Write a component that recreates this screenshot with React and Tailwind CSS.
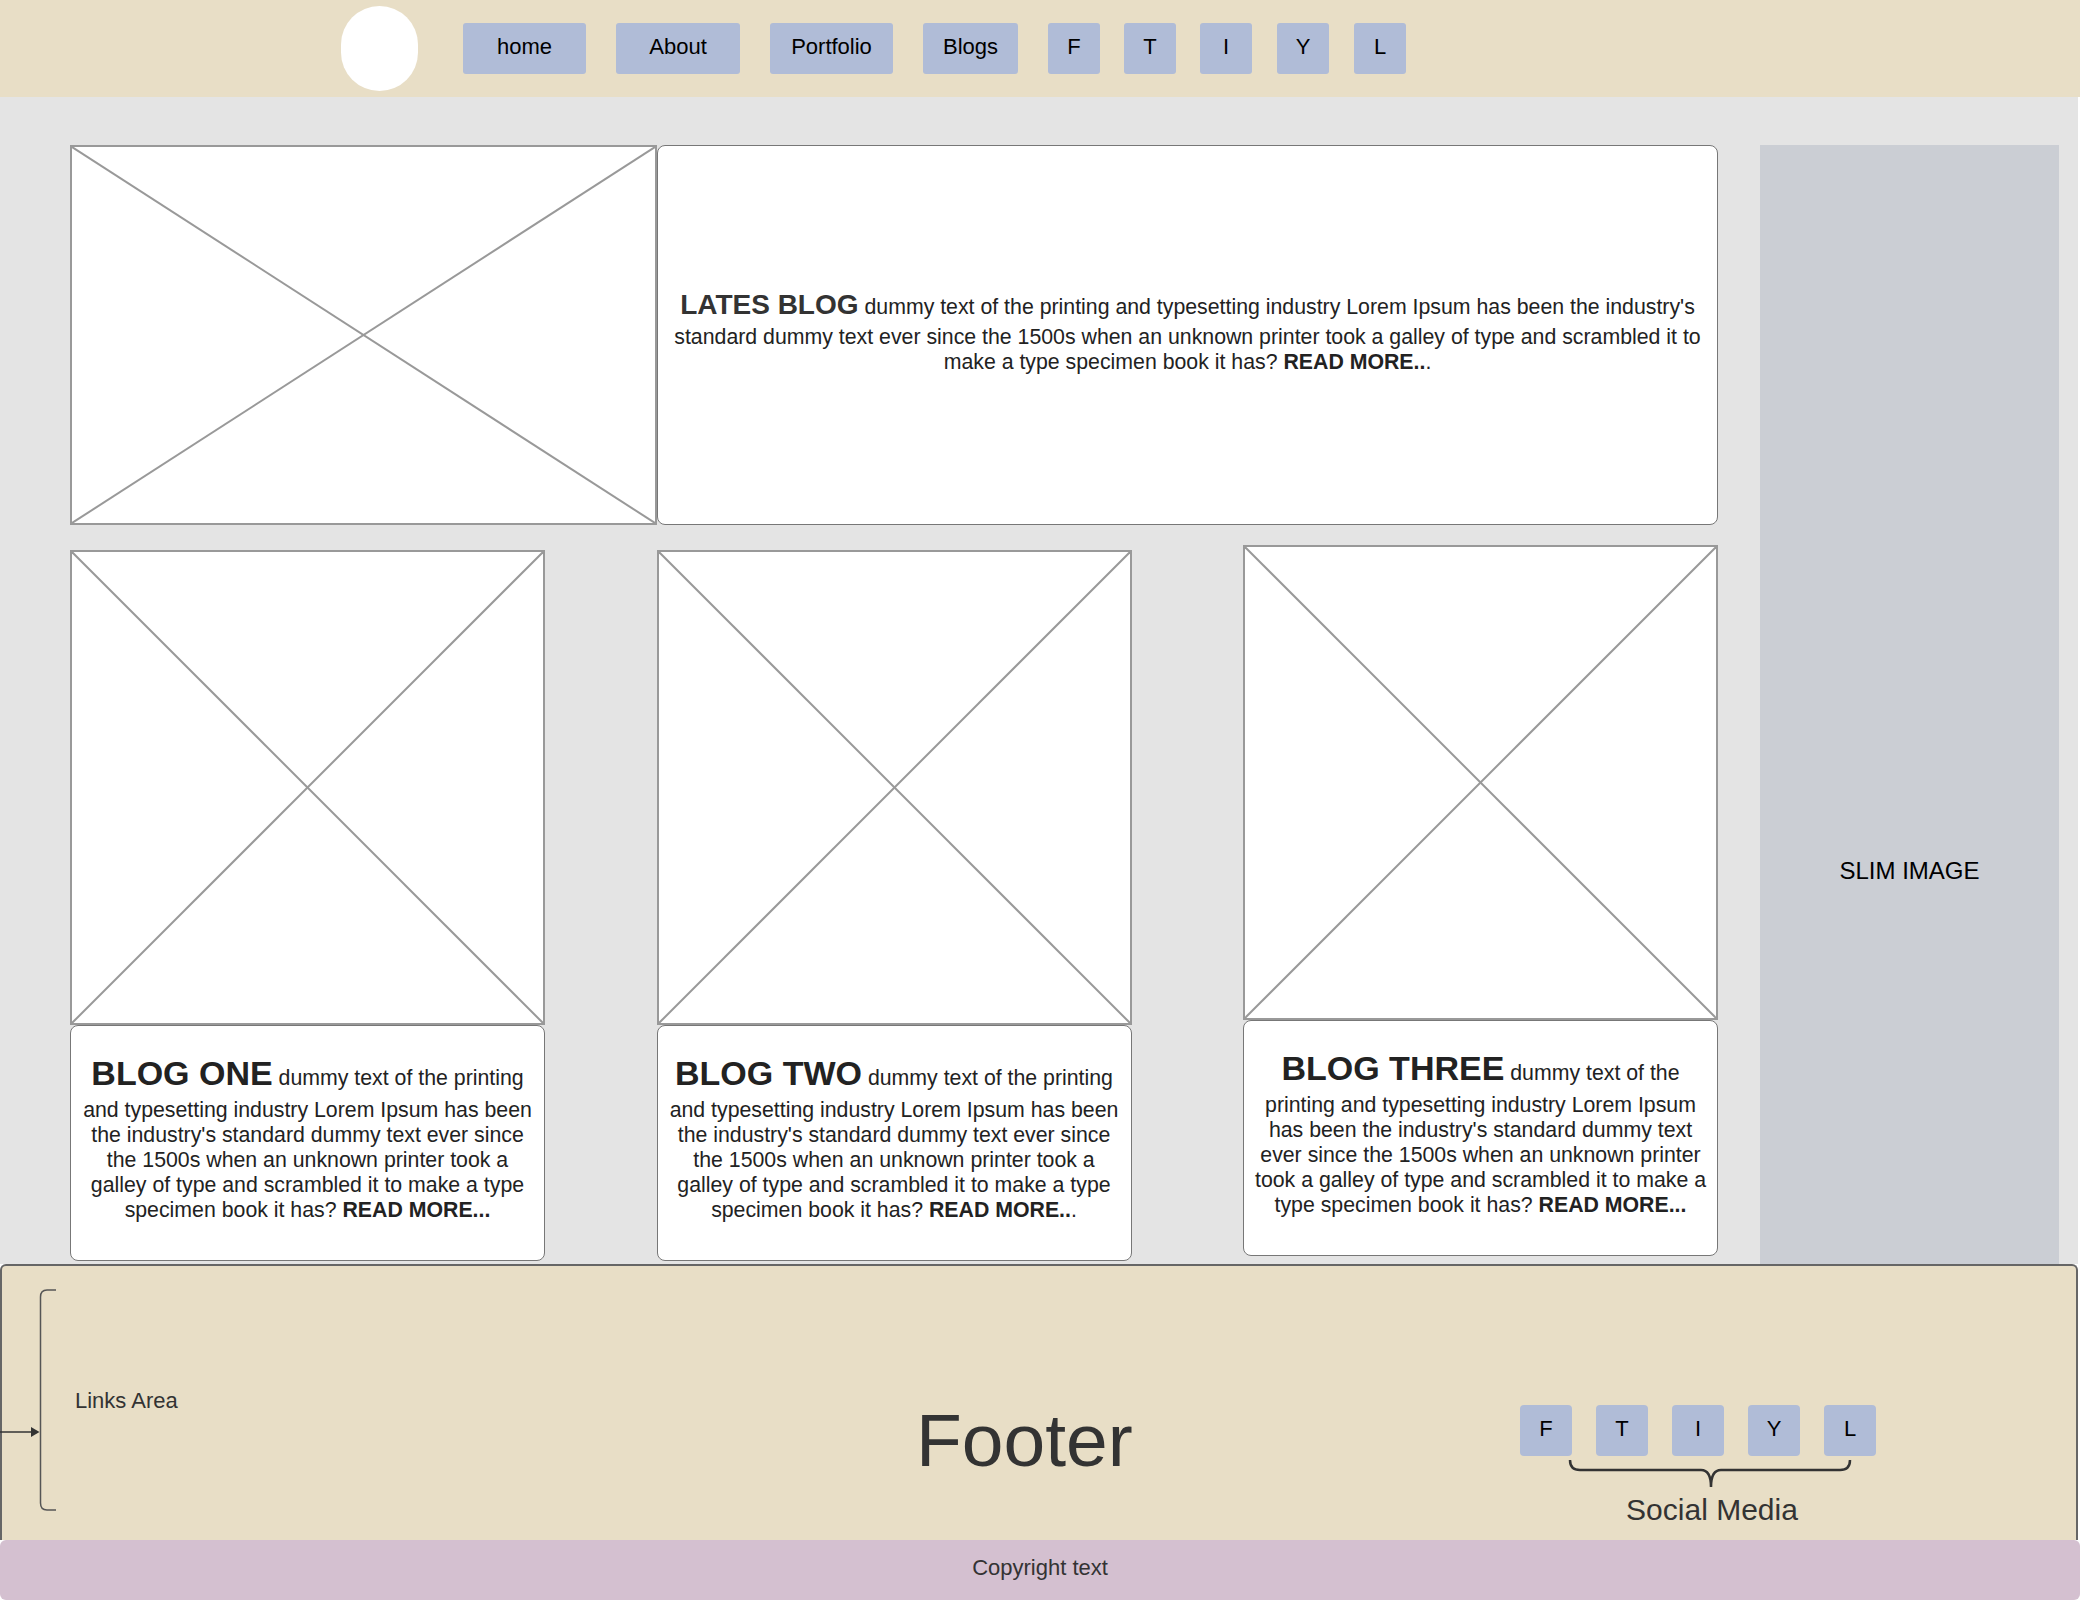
import React from "react";

const Img = ({ className }) => (
  <div className={`relative bg-white border-2 border-[#999] ${className}`}>
    <svg className="absolute inset-0 w-full h-full" viewBox="0 0 100 100" preserveAspectRatio="none">
      <line x1="0" y1="0" x2="100" y2="100" stroke="#999" strokeWidth="2" vectorEffect="non-scaling-stroke" />
      <line x1="100" y1="0" x2="0" y2="100" stroke="#999" strokeWidth="2" vectorEffect="non-scaling-stroke" />
    </svg>
  </div>
);

const NavBtn = ({ children, className }) => (
  <div className={`h-[51px] bg-[#b0bcd7] rounded-[3px] flex items-center justify-center pb-[5px] text-[22px] text-black ${className}`}>
    {children}
  </div>
);

const BlogCard = ({ className, lines }) => (
  <div className={`w-[475px] flex flex-col ${className}`}>
    <Img className="w-[475px] h-[475px]" />
    <div className="h-[236px] bg-white border border-[#777] rounded-[8px] flex flex-col items-center justify-center pb-[10px] text-[#222] text-[21.3px] leading-[25px] whitespace-nowrap text-center">
      {lines}
    </div>
  </div>
);

export default function App() {
  return (
    <div className="w-[2080px] h-[1600px] bg-white overflow-hidden font-['Liberation_Sans',Arial,sans-serif]">
      {/* Header */}
      <header className="h-[97px] bg-[#e8dec6] flex items-center pl-[341px]">
        <div className="w-[77px] h-[85px] rounded-full bg-white" />
        <nav className="flex items-center ml-[45px]">
          <NavBtn className="w-[123px]">home</NavBtn>
          <NavBtn className="w-[124px] ml-[30px]">About</NavBtn>
          <NavBtn className="w-[123px] ml-[30px]">Portfolio</NavBtn>
          <NavBtn className="w-[95px] ml-[30px]">Blogs</NavBtn>
          <NavBtn className="w-[52px] ml-[30px]">F</NavBtn>
          <NavBtn className="w-[52px] ml-[24px]">T</NavBtn>
          <NavBtn className="w-[52px] ml-[24px]">I</NavBtn>
          <NavBtn className="w-[52px] ml-[25px]">Y</NavBtn>
          <NavBtn className="w-[52px] ml-[25px]">L</NavBtn>
        </nav>
      </header>

      {/* Main */}
      <main className="w-[2078px] h-[1167px] bg-[#e4e4e4] flex pl-[70px] pt-[48px] overflow-hidden">
        <div className="w-[1648px] flex flex-col">
          <div className="flex h-[380px]">
            <Img className="w-[587px] h-[380px]" />
            <div className="w-[1061px] h-[380px] bg-white border border-[#777] rounded-[8px] flex flex-col items-center justify-center pb-[8px] text-center text-[21.3px] leading-[25px] text-[#222] whitespace-nowrap">
              <div className="leading-[35px]">
                <span className="text-[28px] font-bold text-[#333]">LATES BLOG</span> dummy text of the printing and typesetting industry Lorem Ipsum has been the industry's
              </div>
              <div>standard dummy text ever since the 1500s when an unknown printer took a galley of type and scrambled it to</div>
              <div>
                make a type specimen book it has? <span className="font-bold">READ MORE..</span>.
              </div>
            </div>
          </div>
          <div className="flex justify-between mt-[20px]">
            <BlogCard
              className="mt-[5px]"
              lines={
                <>
                  <div className="leading-[39px]">
                    <span className="text-[34px] font-bold">BLOG ONE</span> dummy text of the printing
                  </div>
                  <div>and typesetting industry Lorem Ipsum has been</div>
                  <div>the industry's standard dummy text ever since</div>
                  <div>the 1500s when an unknown printer took a</div>
                  <div>galley of type and scrambled it to make a type</div>
                  <div>
                    specimen book it has? <span className="font-bold">READ MORE...</span>
                  </div>
                </>
              }
            />
            <BlogCard
              className="mt-[5px]"
              lines={
                <>
                  <div className="leading-[39px]">
                    <span className="text-[34px] font-bold">BLOG TWO</span> dummy text of the printing
                  </div>
                  <div>and typesetting industry Lorem Ipsum has been</div>
                  <div>the industry's standard dummy text ever since</div>
                  <div>the 1500s when an unknown printer took a</div>
                  <div>galley of type and scrambled it to make a type</div>
                  <div>
                    specimen book it has? <span className="font-bold">READ MORE..</span>.
                  </div>
                </>
              }
            />
            <BlogCard
              className="mt-0"
              lines={
                <>
                  <div className="leading-[39px]">
                    <span className="text-[34px] font-bold">BLOG THREE</span> dummy text of the
                  </div>
                  <div>printing and typesetting industry Lorem Ipsum</div>
                  <div>has been the industry's standard dummy text</div>
                  <div>ever since the 1500s when an unknown printer</div>
                  <div>took a galley of type and scrambled it to make a</div>
                  <div>
                    type specimen book it has? <span className="font-bold">READ MORE...</span>
                  </div>
                </>
              }
            />
          </div>
        </div>
        <div className="ml-[42px] w-[299px] bg-[#cbced4] flex flex-col items-center pt-[712px]">
          <div className="text-[24px] leading-[28px] text-black">SLIM IMAGE</div>
        </div>
      </main>

      {/* Footer */}
      <footer className="w-[2078px] h-[276px] bg-[#e8dec6] border-2 border-b-0 border-[#666] rounded-t-[6px] flex">
        <div className="w-[914px] flex items-start">
          <svg width="58" height="224" className="mt-[23px] -ml-[2px]" viewBox="0 0 58 224">
            <path d="M56 1 H47 Q40.5 1 40.5 8 V214 Q40.5 221 47 221 H56" fill="none" stroke="#555" strokeWidth="1.5" />
            <path d="M0 143 H32" stroke="#333" strokeWidth="1.5" />
            <path d="M31 138 L39.5 143 L31 148 Z" fill="#333" />
          </svg>
          <div className="ml-[17px] mt-[122px] text-[22px] leading-[26px] text-[#333] whitespace-nowrap">Links Area</div>
        </div>
        <div className="w-[604px]">
          <div className="mt-[137px] text-[75px] leading-[75px] text-[#333] whitespace-nowrap">Footer</div>
        </div>
        <div className="w-[356px] mt-[139px] flex flex-col">
          <div className="flex gap-[24px]">
            {["F", "T", "I", "Y", "L"].map((l) => (
              <div
                key={l}
                className="w-[52px] h-[51px] bg-[#b0bcd7] rounded-[4px] flex items-center justify-center pb-[4px] text-[22px] text-black"
              >
                {l}
              </div>
            ))}
          </div>
          <svg width="356" height="30" viewBox="0 0 356 30" className="mt-[4px]">
            <path
              d="M50 0 Q50 10 60 10 H181 Q191 10 191 27 Q191 10 201 10 H320 Q330 10 330 0"
              fill="none"
              stroke="#333"
              strokeWidth="2.5"
            />
          </svg>
          <div className="mt-[2px] pl-[28px] text-center text-[30px] leading-[36px] text-[#333] whitespace-nowrap">
            Social Media
          </div>
        </div>
      </footer>
      <div className="w-[2080px] h-[60px] bg-[#d4c0d0] rounded-[6px] flex items-center justify-center pb-[5px] text-[22px] text-[#333]">
        Copyright text
      </div>
    </div>
  );
}
